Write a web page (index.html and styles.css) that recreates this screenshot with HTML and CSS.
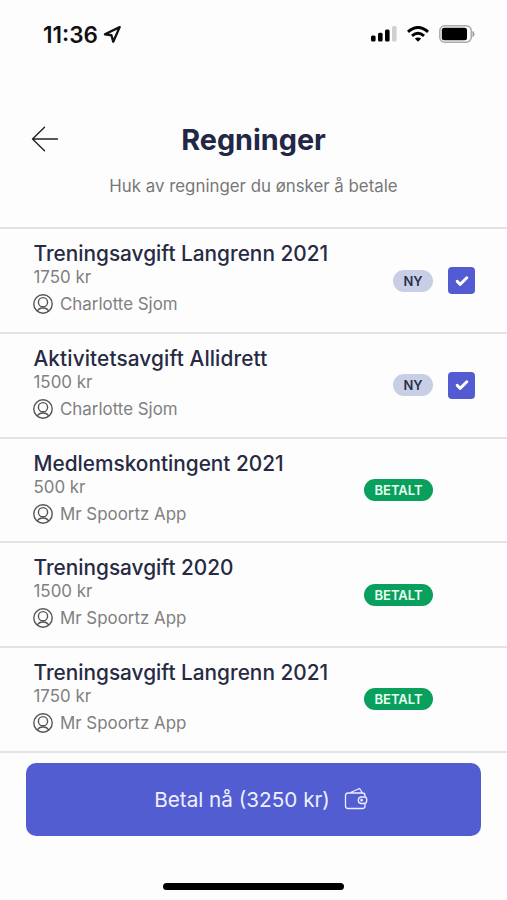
FILE: index.html
```html
<!DOCTYPE html>
<html lang="nb">
<head>
<meta charset="utf-8">
<meta name="viewport" content="width=device-width, initial-scale=1">
<title>Regninger</title>
<link rel="stylesheet" href="styles.css">
</head>
<body>
<svg class="defs" width="0" height="0" aria-hidden="true">
  <symbol id="user" viewBox="0 0 20 20"><g fill="none" stroke="currentColor" stroke-width="1.4"><circle cx="10" cy="10" r="9.2"/><circle cx="10" cy="8.200" r="4.600"/><path d="M4.300 17.100c1.200-2.300 3.200-3.100 5.700-3.100s4.500.800 5.700 3.100"/></g></symbol>
  <symbol id="check" viewBox="0 0 14 12"><path d="M2.200 6.300 5.300 9.300 11.800 2.800" fill="none" stroke="#fff" stroke-width="3" stroke-linecap="round" stroke-linejoin="round"/></symbol>
</svg>
<div class="screen">
  <header class="status">
    <div class="clock"><span class="time">11:36</span>
      <svg width="19" height="19" viewBox="0 0 18 18"><path d="M15.800 2 1.800 8.800 8 9.700 9.700 15.800Z" fill="none" stroke="#111" stroke-width="2.200" stroke-linejoin="round"/></svg>
    </div>
    <div class="indicators">
      <svg width="26" height="16" viewBox="0 0 26 16"><rect x="0" y="9.500" width="4.600" height="6" rx="1.500"/><rect x="7" y="6.800" width="4.600" height="8.700" rx="1.500"/><rect x="14" y="3.500" width="4.600" height="12" rx="1.500"/><rect x="21" y="0" width="4.600" height="15.500" rx="1.500" fill="#d0d0d0"/></svg>
      <svg width="22" height="16" viewBox="0 0 22 16"><g fill="none" stroke="#000" stroke-width="3"><path d="M1 5.800Q11-2.800 21 5.800"/><path d="M5 9.900Q11 4.700 17 9.900"/></g><path d="M11 15.700 7.800 12.600Q11 10.200 14.200 12.600Z"/></svg>
      <svg width="36" height="18" viewBox="0 0 36 18"><rect x=".8" y=".8" width="31.500" height="16.400" rx="5" fill="none" stroke="#aaa" stroke-width="1.500"/><rect x="2.800" y="2.800" width="25.200" height="12.400" rx="2.500"/><path d="M34 6.500q2.200 2.500 0 5Z" fill="#999" stroke="#999"/></svg>
    </div>
  </header>
  <section class="heading">
    <svg class="back" width="28" height="26" viewBox="0 0 28 26"><path d="M13.500 1.200 1.500 13l12 11.800M1.500 13H26.500" fill="none" stroke="#222" stroke-width="1.400" stroke-linecap="round" stroke-linejoin="round"/></svg>
    <h1>Regninger</h1>
  </section>
  <p class="intro">Huk av regninger du ønsker å betale</p>
  <main class="bills">
    <article class="bill"><div class="info"><h2>Treningsavgift Langrenn 2021</h2><p class="price">1750 kr</p><p class="person"><svg><use href="#user"/></svg>Charlotte Sjom</p></div><span class="badge new">NY</span><span class="box"><svg><use href="#check"/></svg></span></article>
    <article class="bill"><div class="info"><h2 class="activity">Aktivitetsavgift Allidrett</h2><p class="price">1500 kr</p><p class="person"><svg><use href="#user"/></svg>Charlotte Sjom</p></div><span class="badge new">NY</span><span class="box"><svg><use href="#check"/></svg></span></article>
    <article class="bill paid"><div class="info"><h2>Medlemskontingent 2021</h2><p class="price">500 kr</p><p class="person"><svg><use href="#user"/></svg>Mr Spoortz App</p></div><span class="badge done">BETALT</span></article>
    <article class="bill paid"><div class="info"><h2>Treningsavgift 2020</h2><p class="price">1500 kr</p><p class="person"><svg><use href="#user"/></svg>Mr Spoortz App</p></div><span class="badge done">BETALT</span></article>
    <article class="bill paid"><div class="info"><h2>Treningsavgift Langrenn 2021</h2><p class="price">1750 kr</p><p class="person"><svg><use href="#user"/></svg>Mr Spoortz App</p></div><span class="badge done">BETALT</span></article>
  </main>
  <button class="pay"><span>Betal nå (3250 kr)</span>
    <svg width="24" height="24" viewBox="0 0 24 24" fill="none" stroke="currentColor" stroke-width="1.300" stroke-linejoin="round"><path d="M21 10V8.500Q21 6 18.500 6H4Q1.500 6 1.500 8.500V19Q1.500 21.500 4 21.500H18.500Q21 21.500 21 19V16.500M5.500 6 15.500 1.500 18.500 6M21 10H17a3.300 3.300 0 0 0 0 6.500H20Q22.800 16.500 22.800 13.300Q22.800 10 21 10Z"/><circle cx="17.600" cy="13.200" r=".7"/></svg>
  </button>
  <div class="home"></div>
</div>
</body>
</html>
```
FILE: styles.css
```css
* { box-sizing: border-box; }
body { margin: 0; background: #fdfdfd; font-family: Inter, sans-serif; }
h1, h2, p { margin: 0; }
.defs { display: block; height: 0; }
.screen { width: 507px; height: 900px; display: flex; flex-direction: column; overflow: hidden; }
.status { height: 68px; flex: none; display: flex; align-items: center; justify-content: space-between; padding: 0 32px 0 43px; }
.clock { display: flex; align-items: center; gap: 5px; }
.time { font-size: 22.5px; font-weight: 600; color: #111; }
.indicators { display: flex; align-items: center; gap: 10px; }
.heading { height: 47px; margin-top: 48px; flex: none; display: grid; grid-template-columns: 1fr auto 1fr; align-items: center; padding: 0 31px; }
.back { margin-top: -1px; }
h1 { font-size: 28.8px; font-weight: 700; line-height: 35px; color: #232746; }
.intro { height: 64.400px; flex: none; padding-top: 12px; text-align: center; font-size: 16.850px; line-height: 23px; color: #777; }
.bills { flex: none; border-top: 2px solid #e3e3e5; }
.bill { height: 104.650px; border-bottom: 2px solid #e3e3e5; display: flex; align-items: center; padding: 0 32px 0 33.500px; }
.info { flex: 1; height: 100%; padding-top: 11px; }
h2 { font-size: 20.800px; font-weight: 500; line-height: 27px; color: #272a43; white-space: nowrap; }
.activity { letter-spacing: .12px; }
.price { font-size: 16.900px; line-height: 20px; color: #808080; }
.person { display: flex; align-items: center; gap: 7px; margin-top: 6px; font-size: 16.900px; line-height: 22px; color: #808080; }
.person svg { width: 20px; height: 20px; color: #555; margin-left: -.5px; }
.badge { height: 22px; border-radius: 11px; display: flex; align-items: center; justify-content: center; font-size: 13px; font-weight: 600; }
.new { width: 40px; background: #c8cee5; color: #283247; margin-right: 15px; }
.done { width: 69px; background: #08a05c; color: #e9fff2; margin-right: 42px; }
.box { width: 27px; height: 27px; border-radius: 4px; background: #525bd1; display: grid; place-items: center; }
.box svg { width: 14px; height: 12px; }
.pay { width: 455px; height: 73px; flex: none; align-self: center; margin-top: 10px; border: 0; border-radius: 10px; background: #525dd1; color: #eef0ff; display: flex; align-items: center; justify-content: center; gap: 14px; padding: 0 0 0 15px; font-family: inherit; font-size: 20.700px; }
.home { width: 181px; height: 7px; flex: none; border-radius: 4px; background: #000; margin: 47px auto 0; }
```
